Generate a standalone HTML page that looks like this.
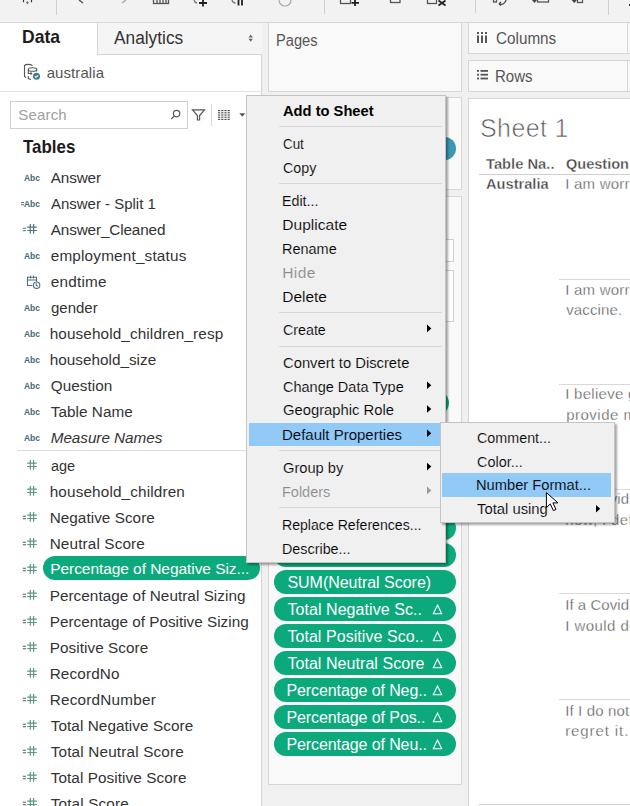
<!DOCTYPE html>
<html><head><meta charset="utf-8">
<style>
html,body{margin:0;padding:0;width:630px;height:806px;overflow:hidden;background:#fff;}
body{position:relative;font-family:"Liberation Sans",sans-serif;}
.r{position:absolute;}
.t{position:absolute;white-space:nowrap;font-family:"Liberation Sans",sans-serif;}
</style></head><body>
<div class="r" style="left:0px;top:0px;width:630px;height:22px;background:#f2f2f2;"></div>
<div class="r" style="left:0px;top:22px;width:630px;height:1px;background:#d9d9d9;"></div>
<div class="r" style="left:629px;top:4px;width:1px;height:2px;background:#333;"></div>
<div class="r" style="left:56px;top:0px;width:1px;height:15px;background:#cfcfcf;"></div>
<div class="r" style="left:324px;top:0px;width:1px;height:14px;background:#cfcfcf;"></div>
<div class="r" style="left:475px;top:0px;width:1px;height:13px;background:#cfcfcf;"></div>
<div class="r" style="left:608px;top:0px;width:1px;height:15px;background:#cfcfcf;"></div>
<div class="r" style="left:0px;top:23px;width:261px;height:783px;background:#fff;"></div>
<div class="r" style="left:261px;top:23px;width:1px;height:783px;background:#d4d4d4;"></div>
<div class="r" style="left:97px;top:23px;width:164px;height:31px;background:#f5f5f5;border-left:1px solid #d4d4d4;border-bottom:1px solid #d4d4d4;box-sizing:border-box;width:165px;height:32px;"></div>
<div class="r" style="left:0px;top:91px;width:261px;height:1px;background:#e3e3e3;"></div>
<div class="r" style="left:10px;top:101px;width:178px;height:28px;background:#fff;border:1px solid #cfcfcf;box-sizing:border-box;"></div>
<div class="r" style="left:211px;top:104px;width:1px;height:22px;background:#d9d9d9;"></div>
<div class="r" style="left:17px;top:450px;width:244px;height:1px;background:#dcdcdc;"></div>
<div class="r" style="left:42.6px;top:556.3px;width:217px;height:24.2px;background:#0ca97c;border-radius:12px;"></div>
<div class="r" style="left:262px;top:23px;width:206px;height:783px;background:#f0f0f0;"></div>
<div class="r" style="left:268px;top:22px;width:194px;height:70px;background:#f9f9f9;border:1px solid #d6d6d6;box-sizing:border-box;"></div>
<div class="r" style="left:268px;top:97px;width:194px;height:93px;background:#f9f9f9;border:1px solid #d6d6d6;box-sizing:border-box;"></div>
<div class="r" style="left:268px;top:196px;width:194px;height:589px;background:#f9f9f9;border:1px solid #d6d6d6;box-sizing:border-box;"></div>
<div class="r" style="left:274px;top:137px;width:182px;height:23px;background:#3d96b4;border-radius:12px;"></div>
<div class="r" style="left:274px;top:239px;width:180px;height:23px;background:#fff;border:1px solid #d0d0d0;box-sizing:border-box;"></div>
<div class="r" style="left:274px;top:270px;width:180px;height:52px;background:#fff;border:1px solid #d0d0d0;box-sizing:border-box;"></div>
<div class="r" style="left:274px;top:391px;width:175px;height:24px;background:#0ca97c;border-radius:12px;"></div>
<div class="r" style="left:274px;top:515.8px;width:182px;height:24px;background:#0ca97c;border-radius:12px;"></div>
<div class="r" style="left:274px;top:542.8px;width:182px;height:24px;background:#0ca97c;border-radius:12px;"></div>
<div class="r" style="left:274px;top:569.8px;width:182px;height:24px;background:#0ca97c;border-radius:12px;"></div>
<div class="r" style="left:274px;top:596.8px;width:182px;height:24px;background:#0ca97c;border-radius:12px;"></div>
<div class="r" style="left:274px;top:623.8px;width:182px;height:24px;background:#0ca97c;border-radius:12px;"></div>
<div class="r" style="left:274px;top:650.8px;width:182px;height:24px;background:#0ca97c;border-radius:12px;"></div>
<div class="r" style="left:274px;top:677.8px;width:182px;height:24px;background:#0ca97c;border-radius:12px;"></div>
<div class="r" style="left:274px;top:704.8px;width:182px;height:24px;background:#0ca97c;border-radius:12px;"></div>
<div class="r" style="left:274px;top:731.8px;width:182px;height:24px;background:#0ca97c;border-radius:12px;"></div>
<div class="r" style="left:468px;top:23px;width:162px;height:75px;background:#f0f0f0;"></div>
<div class="r" style="left:468px;top:22px;width:170px;height:32px;background:#f9f9f9;border:1px solid #d6d6d6;box-sizing:border-box;"></div>
<div class="r" style="left:468px;top:60px;width:170px;height:32px;background:#f9f9f9;border:1px solid #d6d6d6;box-sizing:border-box;"></div>
<div class="r" style="left:627px;top:23px;width:1px;height:30px;background:#d6d6d6;"></div>
<div class="r" style="left:627px;top:61px;width:1px;height:30px;background:#d6d6d6;"></div>
<div class="r" style="left:468px;top:98px;width:170px;height:720px;background:#fff;border:1px solid #d6d6d6;box-sizing:border-box;"></div>
<div class="r" style="left:479px;top:173.5px;width:151px;height:1px;background:#cfcfcf;"></div>
<div class="r" style="left:559px;top:279px;width:71px;height:1px;background:#d9d9d9;"></div>
<div class="r" style="left:559px;top:384px;width:71px;height:1px;background:#d9d9d9;"></div>
<div class="r" style="left:559px;top:489px;width:71px;height:1px;background:#d9d9d9;"></div>
<div class="r" style="left:559px;top:593px;width:71px;height:1px;background:#d9d9d9;"></div>
<div class="r" style="left:559px;top:699px;width:71px;height:1px;background:#d9d9d9;"></div>
<div class="r" style="left:479px;top:803.5px;width:151px;height:1px;background:#cfcfcf;"></div>

<svg class="r" style="left:0;top:0" width="630" height="806" viewBox="0 0 630 806">
 <g fill="none" stroke="#444" stroke-width="1.3">
  <!-- toolbar partial icons -->
  <path d="M23.5 0v2.2M31.5 0v2.2" stroke="#333" stroke-width="1.2"/><path d="M27.4 1.2v3M25.9 2.7h3" stroke="#777" stroke-width="1"/>
  <path d="M79 0 L83 3" stroke="#555" stroke-width="1.5"/>
  <path d="M126 0 L122 3" stroke="#aaa" stroke-width="1.5"/>
  <rect x="153.5" y="-3" width="15" height="6.5" stroke="#555"/>
  <path d="M157 0v3M160 0v3M163 0v3M166 0v3" stroke="#555"/>
  <path d="M203 0 v6.5 M199 3 h8" stroke="#222" stroke-width="1.8"/>
  <path d="M194 0 a4 4 0 0 0 3 3" stroke="#777"/>
  <path d="M238.5 0v5.5M242 0v5.5" stroke="#222" stroke-width="1.8"/>
  <path d="M232 0 a4 4 0 0 0 3.5 3" stroke="#777"/>
  <path d="M279 0 a6 6 0 0 0 12 0" stroke="#aaa" stroke-width="1.2"/>
  <rect x="340.5" y="-4" width="10" height="7.5" stroke="#555"/>
  <path d="M355 0v6 M351.5 2.8h7.5" stroke="#222" stroke-width="1.8"/>
  <rect x="390.5" y="-4" width="9.5" height="6.5" stroke="#555"/>
  <rect x="427.5" y="-4" width="9" height="7.5" stroke="#555"/>
  <path d="M438.5 0.5l7 5M445.5 0.5l-7 5" stroke="#222" stroke-width="1.8"/>
  <rect x="493.5" y="-2" width="3" height="4" stroke="#555"/>
  <path d="M506 0 a5 5 0 0 1 -7 4 M499 4 l2 -2 M499 4 l2 1.5" stroke="#444"/>
  <path d="M532 0 h5 l-2.5 3 z" fill="#444" stroke="none"/>
  <rect x="537.5" y="-3" width="11" height="5" stroke="#555"/>
  <path d="M571.5 0 h5.5 l-2.75 3 z" fill="#444" stroke="none"/>
  <rect x="577.5" y="-3" width="5" height="5.5" stroke="#555"/>
 </g>
 <!-- datasource icon -->
 <g fill="none" stroke="#555" stroke-width="1.1">
  <path d="M32.5 65.5 C30 64 26 64 24.5 65.5 V76.5 L26 77.5"/>
  <ellipse cx="32.5" cy="69.5" rx="4.2" ry="1.8"/>
  <path d="M28.3 69.5 V73.5 H31.5 M30.5 72.5 l1.2 1 l-1.2 1 M28.3 76 V78.5 L31 79.5 M36.7 69.5 V71.5"/>
 </g>
 <circle cx="36.5" cy="76.3" r="3.5" fill="#3f7b93"/>
 <path d="M34.9 76.4 l1.1 1.1 l2.1 -2.2" fill="none" stroke="#fff" stroke-width="1.1"/>
 <!-- search/filter/list -->
 <g fill="none" stroke="#555" stroke-width="1.2">
  <circle cx="176.6" cy="113.6" r="3.2"/>
  <path d="M174.4 115.9 L171.3 119"/>
  <path d="M192.5 109.8 H204.5 L199.6 115.5 V120 H197.4 V115.5 Z"/>
 </g>
 <g fill="#555">
  <rect x="218" y="110" width="2.2" height="1.2" fill="#555"/><rect x="221.2" y="110" width="2.2" height="1.2" fill="#555"/><rect x="224.4" y="110" width="2.2" height="1.2" fill="#555"/><rect x="227.6" y="110" width="2.2" height="1.2" fill="#555"/><rect x="218" y="112.2" width="2.2" height="1.2" fill="#555"/><rect x="221.2" y="112.2" width="2.2" height="1.2" fill="#555"/><rect x="224.4" y="112.2" width="2.2" height="1.2" fill="#555"/><rect x="227.6" y="112.2" width="2.2" height="1.2" fill="#555"/><rect x="218" y="114.4" width="2.2" height="1.2" fill="#555"/><rect x="221.2" y="114.4" width="2.2" height="1.2" fill="#555"/><rect x="224.4" y="114.4" width="2.2" height="1.2" fill="#555"/><rect x="227.6" y="114.4" width="2.2" height="1.2" fill="#555"/><rect x="218" y="116.6" width="2.2" height="1.2" fill="#555"/><rect x="221.2" y="116.6" width="2.2" height="1.2" fill="#555"/><rect x="224.4" y="116.6" width="2.2" height="1.2" fill="#555"/><rect x="227.6" y="116.6" width="2.2" height="1.2" fill="#555"/><rect x="218" y="118.8" width="2.2" height="1.2" fill="#555"/><rect x="221.2" y="118.8" width="2.2" height="1.2" fill="#555"/><rect x="224.4" y="118.8" width="2.2" height="1.2" fill="#555"/><rect x="227.6" y="118.8" width="2.2" height="1.2" fill="#555"/>
  <path d="M239.3 113.3 H245.3 L242.3 116.7 Z"/>
 </g>
 <!-- analytics sort arrows -->
 <path d="M248.5 37.5 L250.7 34.5 L252.9 37.5 Z M248.5 38.8 L250.7 41.8 L252.9 38.8 Z" fill="#666"/>
 <!-- shelves icons -->
 <g fill="#555">
  <rect x="477" y="35.5" width="2" height="7.5"/><rect x="481" y="35.5" width="2" height="7.5"/><rect x="485" y="35.5" width="2" height="7.5"/>
  <rect x="477" y="32" width="2" height="2"/><rect x="481" y="32" width="2" height="2"/><rect x="485" y="32" width="2" height="2"/>
  <rect x="477" y="70" width="2" height="1.8"/><rect x="480.5" y="70" width="7.5" height="1.8"/>
  <rect x="477" y="73.8" width="2" height="1.8"/><rect x="480.5" y="73.8" width="7.5" height="1.8"/>
  <rect x="477" y="77.6" width="2" height="1.8"/><rect x="480.5" y="77.6" width="7.5" height="1.8"/>
 </g>
 <text x="24" y="180.7" font-family="Liberation Sans" font-weight="700" font-size="9.5" fill="#43687a" textLength="16" lengthAdjust="spacingAndGlyphs">Abc</text>
<text x="24" y="206.7" font-family="Liberation Sans" font-weight="700" font-size="9.5" fill="#43687a" textLength="16" lengthAdjust="spacingAndGlyphs">Abc</text>
<path d="M21 202.5 h3 M21 204.7 h3" stroke="#4f7485" stroke-width="1.1"/>
<path d="M22.8 228.3 h3.1 M22.8 230.7 h3.1" stroke="#4f7485" stroke-width="1.1"/>
<path d="M30.3 224.1 V233.8 M33.6 224.1 V233.8 M27.2 227.1 H36.8 M27.2 230.5 H36.8" stroke="#4f7485" stroke-width="1.2" fill="none"/>
<text x="24" y="258.7" font-family="Liberation Sans" font-weight="700" font-size="9.5" fill="#43687a" textLength="16" lengthAdjust="spacingAndGlyphs">Abc</text>
<g fill="none" stroke="#4f6f7c" stroke-width="1.1"><path d="M32.5 285.5 H27.5 V277.2 H36.5 V281.5 M27.5 280 H36.5 M30.6 275.8 V278.5 M33.5 275.8 V278.5"/><circle cx="36.6" cy="285.2" r="3.2" fill="#fff"/><path d="M36.3 283.3 V285.5 L37.8 286.3"/></g>
<text x="24" y="310.7" font-family="Liberation Sans" font-weight="700" font-size="9.5" fill="#43687a" textLength="16" lengthAdjust="spacingAndGlyphs">Abc</text>
<text x="24" y="336.7" font-family="Liberation Sans" font-weight="700" font-size="9.5" fill="#43687a" textLength="16" lengthAdjust="spacingAndGlyphs">Abc</text>
<text x="24" y="362.7" font-family="Liberation Sans" font-weight="700" font-size="9.5" fill="#43687a" textLength="16" lengthAdjust="spacingAndGlyphs">Abc</text>
<text x="24" y="388.7" font-family="Liberation Sans" font-weight="700" font-size="9.5" fill="#43687a" textLength="16" lengthAdjust="spacingAndGlyphs">Abc</text>
<text x="24" y="414.7" font-family="Liberation Sans" font-weight="700" font-size="9.5" fill="#43687a" textLength="16" lengthAdjust="spacingAndGlyphs">Abc</text>
<text x="24" y="440.7" font-family="Liberation Sans" font-weight="700" font-size="9.5" fill="#43687a" textLength="16" lengthAdjust="spacingAndGlyphs">Abc</text>
<path d="M30.3 460.1 V469.8 M33.6 460.1 V469.8 M27.2 463.1 H36.8 M27.2 466.5 H36.8" stroke="#5a9a84" stroke-width="1.2" fill="none"/>
<path d="M30.3 486.1 V495.8 M33.6 486.1 V495.8 M27.2 489.1 H36.8 M27.2 492.5 H36.8" stroke="#5a9a84" stroke-width="1.2" fill="none"/>
<path d="M22.8 516.3 h3.1 M22.8 518.7 h3.1" stroke="#555" stroke-width="1.1"/>
<path d="M30.3 512.1 V521.8 M33.6 512.1 V521.8 M27.2 515.1 H36.8 M27.2 518.5 H36.8" stroke="#5a9a84" stroke-width="1.2" fill="none"/>
<path d="M22.8 542.3 h3.1 M22.8 544.7 h3.1" stroke="#555" stroke-width="1.1"/>
<path d="M30.3 538.1 V547.8 M33.6 538.1 V547.8 M27.2 541.1 H36.8 M27.2 544.5 H36.8" stroke="#5a9a84" stroke-width="1.2" fill="none"/>
<path d="M22.8 568.3 h3.1 M22.8 570.7 h3.1" stroke="#555" stroke-width="1.1"/>
<path d="M30.3 564.1 V573.8 M33.6 564.1 V573.8 M27.2 567.1 H36.8 M27.2 570.5 H36.8" stroke="#5a9a84" stroke-width="1.2" fill="none"/>
<path d="M22.8 594.3 h3.1 M22.8 596.7 h3.1" stroke="#555" stroke-width="1.1"/>
<path d="M30.3 590.1 V599.8 M33.6 590.1 V599.8 M27.2 593.1 H36.8 M27.2 596.5 H36.8" stroke="#5a9a84" stroke-width="1.2" fill="none"/>
<path d="M22.8 620.3 h3.1 M22.8 622.7 h3.1" stroke="#555" stroke-width="1.1"/>
<path d="M30.3 616.1 V625.8 M33.6 616.1 V625.8 M27.2 619.1 H36.8 M27.2 622.5 H36.8" stroke="#5a9a84" stroke-width="1.2" fill="none"/>
<path d="M22.8 646.3 h3.1 M22.8 648.7 h3.1" stroke="#555" stroke-width="1.1"/>
<path d="M30.3 642.1 V651.8 M33.6 642.1 V651.8 M27.2 645.1 H36.8 M27.2 648.5 H36.8" stroke="#5a9a84" stroke-width="1.2" fill="none"/>
<path d="M30.3 668.1 V677.8 M33.6 668.1 V677.8 M27.2 671.1 H36.8 M27.2 674.5 H36.8" stroke="#5a9a84" stroke-width="1.2" fill="none"/>
<path d="M22.8 698.3 h3.1 M22.8 700.7 h3.1" stroke="#555" stroke-width="1.1"/>
<path d="M30.3 694.1 V703.8 M33.6 694.1 V703.8 M27.2 697.1 H36.8 M27.2 700.5 H36.8" stroke="#5a9a84" stroke-width="1.2" fill="none"/>
<path d="M22.8 724.3 h3.1 M22.8 726.7 h3.1" stroke="#555" stroke-width="1.1"/>
<path d="M30.3 720.1 V729.8 M33.6 720.1 V729.8 M27.2 723.1 H36.8 M27.2 726.5 H36.8" stroke="#5a9a84" stroke-width="1.2" fill="none"/>
<path d="M22.8 750.3 h3.1 M22.8 752.7 h3.1" stroke="#555" stroke-width="1.1"/>
<path d="M30.3 746.1 V755.8 M33.6 746.1 V755.8 M27.2 749.1 H36.8 M27.2 752.5 H36.8" stroke="#5a9a84" stroke-width="1.2" fill="none"/>
<path d="M22.8 776.3 h3.1 M22.8 778.7 h3.1" stroke="#555" stroke-width="1.1"/>
<path d="M30.3 772.1 V781.8 M33.6 772.1 V781.8 M27.2 775.1 H36.8 M27.2 778.5 H36.8" stroke="#5a9a84" stroke-width="1.2" fill="none"/>
<path d="M22.8 802.3 h3.1 M22.8 804.7 h3.1" stroke="#555" stroke-width="1.1"/>
<path d="M30.3 798.1 V807.8 M33.6 798.1 V807.8 M27.2 801.1 H36.8 M27.2 804.5 H36.8" stroke="#5a9a84" stroke-width="1.2" fill="none"/>
 <path d="M437.5 605.1 L433.3 613.7 H441.7 Z" fill="none" stroke="#fff" stroke-width="1.1" stroke-linejoin="miter"/>
<path d="M437.5 632.1 L433.3 640.7 H441.7 Z" fill="none" stroke="#fff" stroke-width="1.1" stroke-linejoin="miter"/>
<path d="M437.5 659.1 L433.3 667.7 H441.7 Z" fill="none" stroke="#fff" stroke-width="1.1" stroke-linejoin="miter"/>
<path d="M437.5 686.1 L433.3 694.7 H441.7 Z" fill="none" stroke="#fff" stroke-width="1.1" stroke-linejoin="miter"/>
<path d="M437.5 713.1 L433.3 721.7 H441.7 Z" fill="none" stroke="#fff" stroke-width="1.1" stroke-linejoin="miter"/>
<path d="M437.5 740.1 L433.3 748.7 H441.7 Z" fill="none" stroke="#fff" stroke-width="1.1" stroke-linejoin="miter"/>
</svg>

<span class="t" style="left:21.91px;top:26.95px;font-size:17.8px;line-height:21.36px;color:#1c1c1c;font-weight:700;transform:scaleX(0.9854);transform-origin:0 0;">Data</span>
<span class="t" style="left:114.30px;top:28.44px;font-size:17.6px;line-height:21.12px;color:#333;transform:scaleX(0.9829);transform-origin:0 0;">Analytics</span>
<span class="t" style="left:46.70px;top:63.50px;font-size:15px;line-height:18.0px;color:#555;letter-spacing:0.081px;">australia</span>
<span class="t" style="left:18.30px;top:105.60px;font-size:15px;line-height:18.0px;color:#a0a0a0;letter-spacing:0.163px;">Search</span>
<span class="t" style="left:22.90px;top:136.85px;font-size:17.8px;line-height:21.36px;color:#1c1c1c;font-weight:700;transform:scaleX(0.9506);transform-origin:0 0;">Tables</span>
<span class="t" style="left:50.70px;top:168.72px;font-size:15.3px;line-height:18.36px;color:#333;letter-spacing:-0.123px;">Answer</span>
<span class="t" style="left:50.70px;top:194.72px;font-size:15.3px;line-height:18.36px;color:#333;transform:scaleX(0.9783);transform-origin:0 0;">Answer - Split 1</span>
<span class="t" style="left:50.70px;top:220.72px;font-size:15.3px;line-height:18.36px;color:#333;letter-spacing:-0.130px;">Answer_Cleaned</span>
<span class="t" style="left:50.70px;top:246.72px;font-size:15.3px;line-height:18.36px;color:#333;letter-spacing:0.188px;">employment_status</span>
<span class="t" style="left:50.70px;top:272.72px;font-size:15.3px;line-height:18.36px;color:#333;letter-spacing:0.231px;">endtime</span>
<span class="t" style="left:50.70px;top:298.72px;font-size:15.3px;line-height:18.36px;color:#333;transform:scaleX(0.9803);transform-origin:0 0;">gender</span>
<span class="t" style="left:49.70px;top:324.72px;font-size:15.3px;line-height:18.36px;color:#333;letter-spacing:0.117px;">household_children_resp</span>
<span class="t" style="left:49.70px;top:350.72px;font-size:15.3px;line-height:18.36px;color:#333;letter-spacing:0.015px;">household_size</span>
<span class="t" style="left:50.70px;top:376.72px;font-size:15.3px;line-height:18.36px;color:#333;letter-spacing:0.040px;">Question</span>
<span class="t" style="left:50.70px;top:402.72px;font-size:15.3px;line-height:18.36px;color:#333;letter-spacing:0.054px;">Table Name</span>
<span class="t" style="left:50.70px;top:428.72px;font-size:15.3px;line-height:18.36px;color:#333;font-style:italic;letter-spacing:-0.047px;">Measure Names</span>
<span class="t" style="left:50.70px;top:456.72px;font-size:15.3px;line-height:18.36px;color:#333;transform:scaleX(0.9434);transform-origin:0 0;">age</span>
<span class="t" style="left:49.70px;top:482.72px;font-size:15.3px;line-height:18.36px;color:#333;letter-spacing:0.143px;">household_children</span>
<span class="t" style="left:49.70px;top:508.72px;font-size:15.3px;line-height:18.36px;color:#333;letter-spacing:0.040px;">Negative Score</span>
<span class="t" style="left:49.70px;top:534.72px;font-size:15.3px;line-height:18.36px;color:#333;letter-spacing:0.132px;">Neutral Score</span>
<span class="t" style="left:50.20px;top:559.93px;font-size:15.5px;line-height:18.6px;color:#ffffff;letter-spacing:-0.059px;">Percentage of Negative Siz...</span>
<span class="t" style="left:49.70px;top:586.72px;font-size:15.3px;line-height:18.36px;color:#333;letter-spacing:0.040px;">Percentage of Neutral Sizing</span>
<span class="t" style="left:49.70px;top:612.72px;font-size:15.3px;line-height:18.36px;color:#333;">Percentage of Positive Sizing</span>
<span class="t" style="left:49.70px;top:638.72px;font-size:15.3px;line-height:18.36px;color:#333;letter-spacing:0.057px;">Positive Score</span>
<span class="t" style="left:49.70px;top:664.72px;font-size:15.3px;line-height:18.36px;color:#333;letter-spacing:0.135px;">RecordNo</span>
<span class="t" style="left:49.70px;top:690.72px;font-size:15.3px;line-height:18.36px;color:#333;letter-spacing:0.216px;">RecordNumber</span>
<span class="t" style="left:50.70px;top:716.72px;font-size:15.3px;line-height:18.36px;color:#333;letter-spacing:0.072px;">Total Negative Score</span>
<span class="t" style="left:50.70px;top:742.72px;font-size:15.3px;line-height:18.36px;color:#333;letter-spacing:0.168px;">Total Neutral Score</span>
<span class="t" style="left:50.70px;top:768.72px;font-size:15.3px;line-height:18.36px;color:#333;letter-spacing:0.078px;">Total Positive Score</span>
<span class="t" style="left:50.70px;top:794.72px;font-size:15.3px;line-height:18.36px;color:#333;letter-spacing:0.159px;">Total Score</span>
<span class="t" style="left:275.68px;top:30.76px;font-size:16px;line-height:19.2px;color:#555;transform:scaleX(0.9151);transform-origin:0 0;">Pages</span>
<span class="t" style="left:496.40px;top:28.66px;font-size:16px;line-height:19.2px;color:#555;transform:scaleX(0.9535);transform-origin:0 0;">Columns</span>
<span class="t" style="left:495.46px;top:66.76px;font-size:16px;line-height:19.2px;color:#555;transform:scaleX(0.9357);transform-origin:0 0;">Rows</span>
<span class="t" style="left:287.40px;top:573.16px;font-size:16px;line-height:19.2px;color:#ffffff;letter-spacing:-0.018px;">SUM(Neutral Score)</span>
<span class="t" style="left:287.40px;top:600.16px;font-size:16px;line-height:19.2px;color:#ffffff;letter-spacing:0.064px;">Total Negative Sc..</span>
<span class="t" style="left:287.40px;top:627.16px;font-size:16px;line-height:19.2px;color:#ffffff;letter-spacing:0.056px;">Total Positive Sco..</span>
<span class="t" style="left:287.40px;top:654.16px;font-size:16px;line-height:19.2px;color:#ffffff;letter-spacing:0.058px;">Total Neutral Score</span>
<span class="t" style="left:286.40px;top:681.16px;font-size:16px;line-height:19.2px;color:#ffffff;letter-spacing:-0.093px;">Percentage of Neg..</span>
<span class="t" style="left:286.40px;top:708.16px;font-size:16px;line-height:19.2px;color:#ffffff;letter-spacing:-0.083px;">Percentage of Pos..</span>
<span class="t" style="left:286.40px;top:735.16px;font-size:16px;line-height:19.2px;color:#ffffff;letter-spacing:-0.093px;">Percentage of Neu..</span>
<span class="t" style="left:480.10px;top:112.84px;font-size:25px;line-height:30.0px;color:#555;letter-spacing:0.354px;-webkit-text-stroke:0.7px #fff;">Sheet 1</span>
<span class="t" style="left:486.30px;top:155.03px;font-size:15.5px;line-height:18.6px;color:#444;font-weight:700;-webkit-text-stroke:0.35px #fff;transform:scaleX(0.9504);transform-origin:0 0;">Table Na..</span>
<span class="t" style="left:566.20px;top:155.03px;font-size:15.5px;line-height:18.6px;color:#444;font-weight:700;-webkit-text-stroke:0.35px #fff;transform:scaleX(0.9370);transform-origin:0 0;">Question</span>
<span class="t" style="left:486.30px;top:174.53px;font-size:15.5px;line-height:18.6px;color:#444;font-weight:700;-webkit-text-stroke:0.35px #fff;transform:scaleX(0.9444);transform-origin:0 0;">Australia</span>
<span class="t" style="left:565.20px;top:175.00px;font-size:15px;line-height:18.0px;color:#555;letter-spacing:0.226px;-webkit-text-stroke:0.3px #fff;">I am worried</span>
<span class="t" style="left:565.20px;top:280.50px;font-size:15px;line-height:18.0px;color:#555;letter-spacing:0.226px;-webkit-text-stroke:0.3px #fff;">I am worried</span>
<span class="t" style="left:566.20px;top:301.40px;font-size:15px;line-height:18.0px;color:#555;letter-spacing:0.134px;-webkit-text-stroke:0.3px #fff;">vaccine.</span>
<span class="t" style="left:565.20px;top:385.20px;font-size:15px;line-height:18.0px;color:#555;letter-spacing:0.284px;-webkit-text-stroke:0.3px #fff;">I believe govern</span>
<span class="t" style="left:566.20px;top:406.30px;font-size:15px;line-height:18.0px;color:#555;letter-spacing:0.491px;-webkit-text-stroke:0.3px #fff;">provide more</span>
<span class="t" style="left:565.20px;top:490.40px;font-size:15px;line-height:18.0px;color:#555;letter-spacing:0.053px;-webkit-text-stroke:0.3px #fff;">If a Covid</span>
<span class="t" style="left:565.20px;top:511.30px;font-size:15px;line-height:18.0px;color:#555;letter-spacing:0.350px;-webkit-text-stroke:0.3px #fff;">now, I definitely</span>
<span class="t" style="left:565.20px;top:596.10px;font-size:15px;line-height:18.0px;color:#555;letter-spacing:0.053px;-webkit-text-stroke:0.3px #fff;">If a Covid</span>
<span class="t" style="left:565.20px;top:617.20px;font-size:15px;line-height:18.0px;color:#555;letter-spacing:0.453px;-webkit-text-stroke:0.3px #fff;">I would do</span>
<span class="t" style="left:565.20px;top:701.90px;font-size:15px;line-height:18.0px;color:#555;letter-spacing:0.141px;-webkit-text-stroke:0.3px #fff;">If I do not</span>
<span class="t" style="left:565.20px;top:721.60px;font-size:15px;line-height:18.0px;color:#555;letter-spacing:0.905px;-webkit-text-stroke:0.3px #fff;">regret it.</span>
<div class="r" style="left:246px;top:95px;width:200px;height:468px;background:#f0f0f0;border:1px solid #c4c4c4;box-sizing:border-box;box-shadow:2px 2px 2px rgba(0,0,0,0.35);"></div><div class="r" style="left:279px;top:126px;width:163px;height:1px;background:#d7d7d7;"></div><div class="r" style="left:279px;top:183px;width:163px;height:1px;background:#d7d7d7;"></div><div class="r" style="left:279px;top:312px;width:163px;height:1px;background:#d7d7d7;"></div><div class="r" style="left:279px;top:345.5px;width:163px;height:1px;background:#d7d7d7;"></div><div class="r" style="left:279px;top:450px;width:163px;height:1px;background:#d7d7d7;"></div><div class="r" style="left:279px;top:507px;width:163px;height:1px;background:#d7d7d7;"></div><div class="r" style="left:249px;top:422.5px;width:193px;height:23.5px;background:#91c9f7;"></div>
<svg class="r" style="left:0;top:0" width="630" height="806"><path d="M427 324.6 L431.3 328.4 L427 332.2 Z" fill="#000"/><path d="M427 381.4 L431.3 385.2 L427 389.0 Z" fill="#000"/><path d="M427 405.2 L431.3 409.0 L427 412.8 Z" fill="#000"/><path d="M427 429.4 L431.3 433.2 L427 437.0 Z" fill="#000"/><path d="M427 462.8 L431.3 466.6 L427 470.4 Z" fill="#000"/><path d="M427 486.6 L431.3 490.4 L427 494.2 Z" fill="#999"/></svg>
<span class="t" style="left:283.30px;top:102.02px;font-size:15.3px;line-height:18.36px;color:#000;font-weight:700;transform:scaleX(0.9604);transform-origin:0 0;">Add to Sheet</span>
<span class="t" style="left:283.30px;top:134.93px;font-size:15.5px;line-height:18.6px;color:#000;-webkit-text-stroke:0.15px #f0f0f0;transform:scaleX(0.8624);transform-origin:0 0;">Cut</span>
<span class="t" style="left:283.30px;top:159.23px;font-size:15.5px;line-height:18.6px;color:#000;-webkit-text-stroke:0.15px #f0f0f0;transform:scaleX(0.9195);transform-origin:0 0;">Copy</span>
<span class="t" style="left:282.38px;top:192.03px;font-size:15.5px;line-height:18.6px;color:#000;-webkit-text-stroke:0.15px #f0f0f0;transform:scaleX(0.9190);transform-origin:0 0;">Edit...</span>
<span class="t" style="left:282.30px;top:215.93px;font-size:15.5px;line-height:18.6px;color:#000;letter-spacing:0.025px;-webkit-text-stroke:0.15px #f0f0f0;">Duplicate</span>
<span class="t" style="left:282.37px;top:239.73px;font-size:15.5px;line-height:18.6px;color:#000;-webkit-text-stroke:0.15px #f0f0f0;transform:scaleX(0.9339);transform-origin:0 0;">Rename</span>
<span class="t" style="left:282.30px;top:264.03px;font-size:15.5px;line-height:18.6px;color:#8a8a8a;letter-spacing:0.381px;-webkit-text-stroke:0.15px #f0f0f0;">Hide</span>
<span class="t" style="left:282.30px;top:287.83px;font-size:15.5px;line-height:18.6px;color:#000;letter-spacing:-0.037px;-webkit-text-stroke:0.15px #f0f0f0;">Delete</span>
<span class="t" style="left:283.30px;top:320.83px;font-size:15.5px;line-height:18.6px;color:#000;-webkit-text-stroke:0.15px #f0f0f0;transform:scaleX(0.9193);transform-origin:0 0;">Create</span>
<span class="t" style="left:283.30px;top:353.83px;font-size:15.5px;line-height:18.6px;color:#000;-webkit-text-stroke:0.15px #f0f0f0;transform:scaleX(0.9528);transform-origin:0 0;">Convert to Discrete</span>
<span class="t" style="left:283.30px;top:377.63px;font-size:15.5px;line-height:18.6px;color:#000;-webkit-text-stroke:0.15px #f0f0f0;transform:scaleX(0.9360);transform-origin:0 0;">Change Data Type</span>
<span class="t" style="left:283.30px;top:401.43px;font-size:15.5px;line-height:18.6px;color:#000;-webkit-text-stroke:0.15px #f0f0f0;transform:scaleX(0.9542);transform-origin:0 0;">Geographic Role</span>
<span class="t" style="left:282.33px;top:425.63px;font-size:15.5px;line-height:18.6px;color:#000;-webkit-text-stroke:0.15px #91c9f7;transform:scaleX(0.9675);transform-origin:0 0;">Default Properties</span>
<span class="t" style="left:283.30px;top:459.03px;font-size:15.5px;line-height:18.6px;color:#000;-webkit-text-stroke:0.15px #f0f0f0;transform:scaleX(0.9452);transform-origin:0 0;">Group by</span>
<span class="t" style="left:282.37px;top:482.83px;font-size:15.5px;line-height:18.6px;color:#8a8a8a;-webkit-text-stroke:0.15px #f0f0f0;transform:scaleX(0.9345);transform-origin:0 0;">Folders</span>
<span class="t" style="left:282.39px;top:516.23px;font-size:15.5px;line-height:18.6px;color:#000;-webkit-text-stroke:0.15px #f0f0f0;transform:scaleX(0.9096);transform-origin:0 0;">Replace References...</span>
<span class="t" style="left:282.37px;top:540.23px;font-size:15.5px;line-height:18.6px;color:#000;-webkit-text-stroke:0.15px #f0f0f0;transform:scaleX(0.9251);transform-origin:0 0;">Describe...</span>
<div class="r" style="left:440px;top:422px;width:175px;height:101px;background:#f0f0f0;border:1px solid #c4c4c4;box-sizing:border-box;box-shadow:2px 2px 2px rgba(0,0,0,0.35);"></div><div class="r" style="left:442px;top:473px;width:169px;height:24px;background:#91c9f7;"></div>
<svg class="r" style="left:0;top:0" width="630" height="806"><path d="M596 505 L600.2 508.8 L596 512.6 Z" fill="#000"/></svg>
<span class="t" style="left:476.50px;top:428.73px;font-size:15.5px;line-height:18.6px;color:#000;-webkit-text-stroke:0.15px #f0f0f0;transform:scaleX(0.9239);transform-origin:0 0;">Comment...</span>
<span class="t" style="left:476.50px;top:452.53px;font-size:15.5px;line-height:18.6px;color:#000;-webkit-text-stroke:0.15px #f0f0f0;transform:scaleX(0.9310);transform-origin:0 0;">Color...</span>
<span class="t" style="left:475.55px;top:476.43px;font-size:15.5px;line-height:18.6px;color:#000;-webkit-text-stroke:0.15px #91c9f7;transform:scaleX(0.9468);transform-origin:0 0;">Number Format...</span>
<span class="t" style="left:476.50px;top:500.33px;font-size:15.5px;line-height:18.6px;color:#000;-webkit-text-stroke:0.15px #f0f0f0;transform:scaleX(0.9553);transform-origin:0 0;">Total using</span>
<svg class="r" style="left:0;top:0" width="630" height="806"><path d="M546.4 492.6 V507.6 L550.3 503.9 L553.4 510.6 L556 509.4 L552.9 502.9 L558 502.9 Z" fill="#fff" stroke="#000" stroke-width="1" stroke-linejoin="round"/></svg>
</body></html>
